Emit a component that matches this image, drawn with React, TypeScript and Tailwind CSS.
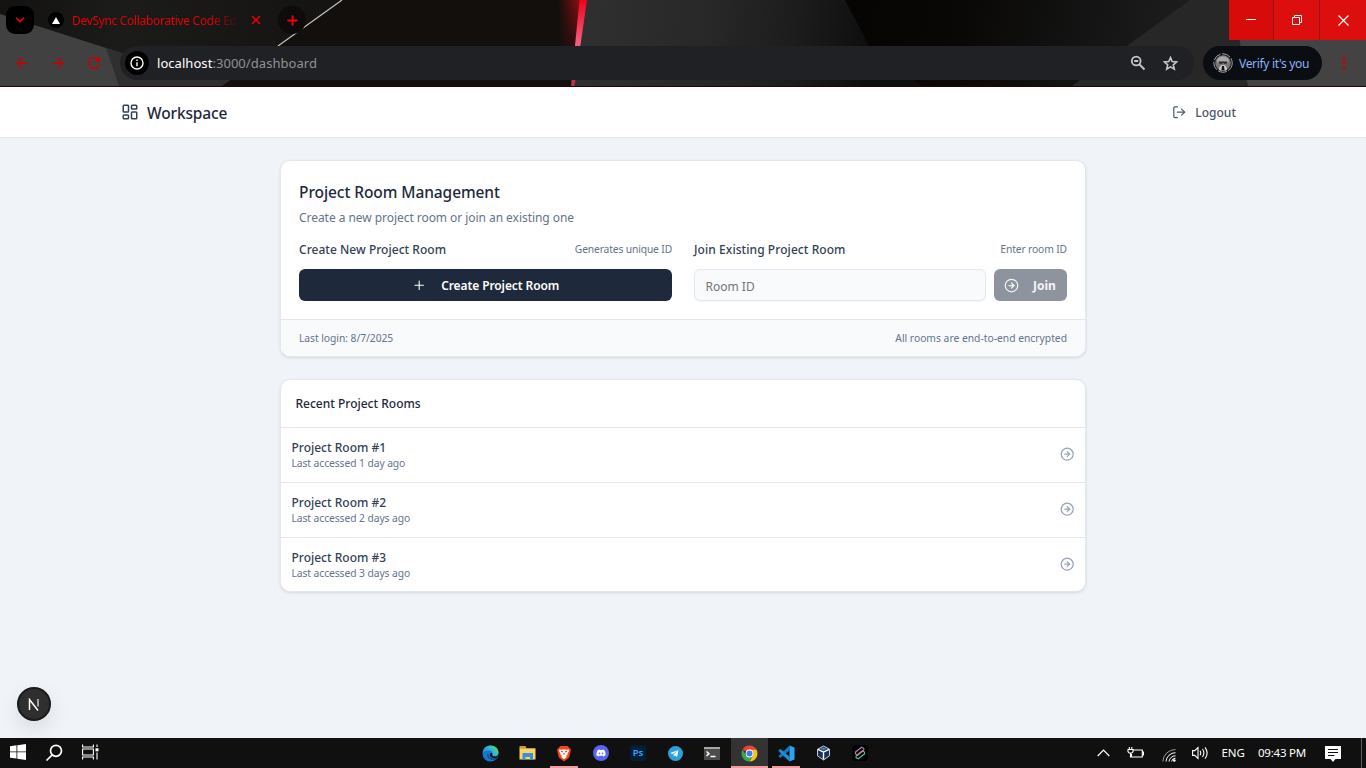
import type { ReactNode } from "react";
import { LayoutDashboard, LogOut, Plus, CircleArrowRight, X, ChevronDown, ArrowLeft, ArrowRight, Star } from "lucide-react";
import { FaDiscord, FaTelegramPlane } from "react-icons/fa";

const rooms = [
  { name: "Project Room #1", seen: "Last accessed 1 day ago" },
  { name: "Project Room #2", seen: "Last accessed 2 days ago" },
  { name: "Project Room #3", seen: "Last accessed 3 days ago" },
];

function Wallpaper() {
  return (
    <svg className="absolute inset-0 h-[86px] w-full" viewBox="0 0 1366 86" preserveAspectRatio="none" aria-hidden="true">
      <defs>
        <linearGradient id="left" x1="0" x2="1">
          <stop offset="0" stopColor="#131210" />
          <stop offset="0.3" stopColor="#1b1b1a" />
          <stop offset="1" stopColor="#13110f" />
        </linearGradient>
        <linearGradient id="mid" gradientUnits="userSpaceOnUse" x1="574" y1="0" x2="870" y2="40">
          <stop offset="0" stopColor="#303030" />
          <stop offset="0.45" stopColor="#282828" />
          <stop offset="0.75" stopColor="#1c1c1c" />
          <stop offset="1" stopColor="#0e0e0e" />
        </linearGradient>
        <linearGradient id="glow" x1="0" x2="1">
          <stop offset="0" stopColor="#8b0f12" stopOpacity="0" />
          <stop offset="1" stopColor="#8b0f12" />
        </linearGradient>
        <linearGradient id="fade" x1="0" y1="0" x2="0" y2="1">
          <stop offset="0" stopColor="#120f0c" stopOpacity="0" />
          <stop offset="0.75" stopColor="#120f0c" />
        </linearGradient>
        <linearGradient id="beam" x1="0" y1="0" x2="0" y2="1">
          <stop offset="0" stopColor="#f00020" />
          <stop offset="0.5" stopColor="#f4607c" />
          <stop offset="1" stopColor="#b8304a" />
        </linearGradient>
        <linearGradient id="right" gradientUnits="userSpaceOnUse" x1="845" y1="0" x2="1180" y2="60">
          <stop offset="0" stopColor="#060402" />
          <stop offset="0.35" stopColor="#090807" />
          <stop offset="1" stopColor="#1d1d1d" />
        </linearGradient>
      </defs>
      <rect width="400" height="86" fill="url(#left)" />
      <polygon points="0,14 125,54 120,86 0,86" fill="#414141" />
      <polygon points="106,48 125,54 240,80 225,86 119,86" fill="#2f2f2f" />
      <polygon points="342,0 580,0 572,86 222,86 278,46" fill="#120f0c" />
      <path d="M342 0L278 46" stroke="#c4c4c4" strokeWidth="1.200" />
      <rect x="558" y="0" width="22" height="86" fill="url(#glow)" />
      <rect x="558" y="0" width="22" height="86" fill="url(#fade)" />
      <polygon points="586,0 880,0 930,86 574,86" fill="url(#mid)" />
      <polygon points="845,0 1250,0 1250,86 922,86 870,48" fill="url(#right)" />
      <polygon points="1190,0 1232,0 1248,86 1072,86" fill="#272727" />
      <polygon points="1232,0 1366,0 1366,86 1248,86" fill="#434343" />
      <polygon points="579.5,0 587,0 574.5,86 571,86" fill="url(#beam)" />
    </svg>
  );
}

function BrowserBar() {
  return (
    <div className="relative h-[87px] shrink-0 overflow-hidden border-b border-[#2b0000] bg-[#141312]">
      <Wallpaper />
      <div className="relative flex h-[46px] items-start">
        <button className="mt-[6px] ml-[6px] flex h-7 w-7 items-center justify-center rounded-[9px] bg-black text-[#f00000]">
          <ChevronDown size={14} strokeWidth={3} />
        </button>
        <div className="mt-[6px] ml-[14px] flex h-7 w-[216px] items-center">
          <span className="flex h-4 w-4 items-center justify-center rounded-full bg-black">
            <svg width="8" height="7" viewBox="0 0 8 7"><path d="M4 0L8 7H0Z" fill="#fff" /></svg>
          </span>
          <span className="mt-[2px] ml-2 w-[170px] bg-gradient-to-r from-[#e80000] from-80% to-[#e8000010] to-98% bg-clip-text text-[12px] leading-5 tracking-[-0.320px] whitespace-nowrap text-transparent">
            DevSync Collaborative Code Ed
          </span>
          <X size={14} strokeWidth={2.600} className="ml-[7px] shrink-0 text-[#f00000]" />
        </div>
        <button className="mt-[6px] ml-[14px] flex h-7 w-7 items-center justify-center rounded-full bg-[#0d0c0b] text-[#f00000]">
          <Plus size={15} strokeWidth={3} />
        </button>
        <div className="ml-auto flex h-10 text-white">
          <span className="flex w-[45px] items-center justify-center border-r border-[#9c1313] bg-[#d80b0b]">
            <svg width="10" height="10" viewBox="0 0 10 10"><path d="M0 4.5h10" stroke="#fff" /></svg>
          </span>
          <span className="flex w-[46px] items-center justify-center border-r border-[#9c1313] bg-[#dc0e0e]">
            <svg width="10" height="10" viewBox="0 0 10 10" fill="none" stroke="#fff"><path d="M.5 2.5h7v7h-7zM2.5 2.5v-2h7v7h-2" /></svg>
          </span>
          <span className="flex w-[46px] items-center justify-center bg-[#dc0e0e]">
            <svg width="11" height="11" viewBox="0 0 11 11"><path d="M.5 .5l10 10M10.5 .5l-10 10" stroke="#fff" strokeWidth="1.2" /></svg>
          </span>
        </div>
      </div>
      <div className="relative flex h-[34px] items-center">
        <div className="ml-[14px] flex items-center gap-[20px] text-[#c80000]">
          <ArrowLeft size={16} strokeWidth={2.2} />
          <ArrowRight size={16} strokeWidth={2.2} />
          <svg width="16" height="16" viewBox="0 0 16 16" fill="none" stroke="currentColor" strokeWidth="1.5"><path d="M13.200 9.500A5.300 5.300 0 1 1 12.600 5.300M13.300 2.300v3.900H9.400" /></svg>
        </div>
        <div className="ml-[18px] flex h-[34px] w-[1074px] items-center rounded-full bg-[#202124] pl-[5px]">
          <span className="flex h-6 w-6 items-center justify-center rounded-full bg-black">
            <svg width="14" height="14" viewBox="0 0 14 14" fill="none" stroke="#fff" strokeWidth="1.4"><circle cx="7" cy="7" r="6" /><path d="M7 6.2v4M7 3.6v1.4" /></svg>
          </span>
          <span className="mt-px ml-2 text-[13px] tracking-[0.050px] whitespace-nowrap text-[#8f9296]"><span className="text-white">localhost</span>:3000/dashboard</span>
          <svg className="ml-auto" width="16" height="16" viewBox="0 0 16 16" fill="none" stroke="#c7c7c7" strokeWidth="1.8"><circle cx="6.2" cy="6" r="4.4" /><path d="M9.5 9.5l5 5M4.2 6h4" /></svg>
          <svg className="mr-[16px] ml-[17px]" width="15" height="15" viewBox="0 0 15 15" fill="none" stroke="#c7c7c7" strokeWidth="1.600"><path d="M7.500 1.600l1.700 4 4.400.4-3.300 2.900 1 4.300-3.800-2.300-3.800 2.300 1-4.300L1.400 6l4.400-.4z" /></svg>
        </div>
        <div className="ml-[9px] flex h-[34px] w-[119px] items-center rounded-full bg-[#0a0d12] pl-[10px]">
          <svg width="20" height="20" viewBox="0 0 20 20">
            <circle cx="10" cy="10" r="9.2" fill="none" stroke="#a5a5a5" strokeDasharray="9 1.5" />
            <circle cx="10" cy="10" r="7.8" fill="#777" />
            <path d="M4 9c-.5-7.500 12.500-7.500 12 0l-2 1.500H6z" fill="#a9a9a9" />
            <path d="M5.500 8.500h9l-.5 2-2.500.5-1.500-1-1.500 1-2.500-.5z" fill="#2a2a2a" />
            <path d="M6 17c0-3 1.500-5 4-5s4 2 4 5c-2.500 1.200-5.500 1.200-8 0z" fill="#d0d0d0" />
            <path d="M9 13h2l.7 4.500H8.300z" fill="#151515" />
          </svg>
          <span className="mt-px ml-[6px] text-[12px] tracking-[-0.320px] whitespace-nowrap text-[#8ab4f8]">Verify it's you</span>
        </div>
        <svg className="ml-[20px]" width="4" height="14" viewBox="0 0 4 14" fill="#c80000"><circle cx="2" cy="2" r="1.600" /><circle cx="2" cy="7" r="1.600" /><circle cx="2" cy="12" r="1.600" /></svg>
      </div>
    </div>
  );
}

function WorkspaceHeader() {
  return (
    <header className="flex h-[51px] shrink-0 items-center border-b border-[#e2e8f0] bg-white pr-[130px] pl-[121px]">
      <LayoutDashboard size={18} strokeWidth={2} className="text-[#334155]" />
      <h1 className="mt-[2px] ml-2 text-[15.500px] leading-6 font-medium tracking-[-0.130px] text-[#1e293b]">Workspace</h1>
      <button className="ml-auto flex items-center text-[#475569]">
        <LogOut size={14.4} />
        <span className="mt-px ml-[9px] text-[12px] leading-[18px] font-medium">Logout</span>
      </button>
    </header>
  );
}

function ManagementCard() {
  return (
    <section className="overflow-hidden rounded-[10px] border border-[#e2e8f0] bg-white shadow-[0_1px_3px_rgba(15,23,42,0.12)]">
      <div className="px-[18px] pt-[19px] pb-[18px]">
        <h2 className="text-[15.500px] leading-6 font-medium tracking-[-0.080px] text-[#1e293b]">Project Room Management</h2>
        <p className="mt-[5px] text-[12px] leading-[18px] tracking-[-0.050px] text-[#64748b]">Create a new project room or join an existing one</p>
        <div className="mt-[14px] grid grid-cols-2 gap-[22px]">
          <div>
            <div className="flex h-[18px] items-center justify-between">
              <h3 className="text-[12px] font-medium tracking-[0.030px] text-[#334155]">Create New Project Room</h3>
              <span className="text-[10.300px] tracking-[-0.150px] text-[#64748b]">Generates unique ID</span>
            </div>
            <button className="mt-[10px] flex h-8 w-full items-center justify-center rounded-[6px] bg-[#1e293b] text-[12px] font-semibold text-white">
              <Plus size={14.4} strokeWidth={1.800} className="mr-[15px]" />
              <span className="mt-px tracking-[-0.100px]">Create Project Room</span>
            </button>
          </div>
          <div>
            <div className="flex h-[18px] items-center justify-between">
              <h3 className="text-[12px] font-medium tracking-[0.070px] text-[#334155]">Join Existing Project Room</h3>
              <span className="text-[10.300px] tracking-[-0.130px] text-[#64748b]">Enter room ID</span>
            </div>
            <div className="mt-[10px] flex gap-2">
              <div className="flex h-8 flex-1 items-center rounded-[6px] border border-[#e2e8f0] bg-[#f8fafc] px-[10.500px] pt-[3px] text-[12px] text-[#757575] shadow-[0_1px_2px_rgba(0,0,0,0.04)]">
                Room ID
              </div>
              <button className="flex h-8 w-[73px] items-center rounded-[6px] bg-[#8e949d] pl-[10px] text-[12px] font-bold text-[#f3f4f5]">
                <CircleArrowRight size={15} className="mr-[14px]" />
                <span className="mt-px">Join</span>
              </button>
            </div>
          </div>
        </div>
      </div>
      <footer className="flex h-[37px] items-center justify-between border-t border-[#e2e8f0] bg-[#f8fafc] px-[18px] pt-[2px] text-[10.300px] text-[#64748b]">
        <span className="tracking-[-0.050px]">Last login: 8/7/2025</span>
        <span>All rooms are end-to-end encrypted</span>
      </footer>
    </section>
  );
}

function RecentRooms() {
  return (
    <section className="mt-[22px] h-[213px] overflow-hidden rounded-[10px] border border-[#e2e8f0] bg-white shadow-[0_1px_3px_rgba(15,23,42,0.12)]">
      <h2 className="flex h-[47px] items-center pl-[14.500px] text-[12px] font-medium text-[#1e293b]">Recent Project Rooms</h2>
      {rooms.map((room) => (
        <div key={room.name} className="flex h-[55px] items-center justify-between border-t border-[#e2e8f0] pr-[11px] pl-[10.500px]">
          <div>
            <p className="text-[12px] leading-[17px] font-medium text-[#334155]">{room.name}</p>
            <p className="text-[10.300px] leading-[15px] tracking-[-0.080px] text-[#64748b]">{room.seen}</p>
          </div>
          <CircleArrowRight size={14.4} className="mb-[2px] text-[#94a3b8]" />
        </div>
      ))}
    </section>
  );
}

function Cell({ children, active, running }: { children: ReactNode; active?: boolean; running?: boolean }) {
  return (
    <div className={active ? "flex h-[30px] w-[37px] flex-col items-center bg-[#333333]" : "flex h-[30px] w-[37px] flex-col items-center"}>
      <div className="flex h-7 items-center pt-[2px]">{children}</div>
      <div className={active ? "h-[2px] w-full bg-[#f59a9f]" : running ? "h-[2px] w-7 bg-[#f59a9f]" : "h-[2px]"} />
    </div>
  );
}

function Taskbar() {
  return (
    <footer className="flex h-[30px] shrink-0 items-center bg-[#101010] text-white">
      <div className="flex w-[471.500px]">
        <span className="flex w-9 justify-center"><svg width="16" height="16" viewBox="0 0 16 16" fill="#fff"><path d="M0 2.300L6.500 1.300V7.500H0zM7.300 1.200L16 0V7.500H7.300zM0 8.300H6.500V14.600L0 13.700zM7.300 8.300H16V16L7.300 14.700z" /></svg></span>
        <span className="flex w-9 justify-center"><svg width="18" height="18" viewBox="0 0 18 18" fill="none" stroke="#fff" strokeWidth="1.700"><circle cx="11" cy="6.800" r="5.500" /><path d="M7.200 10.800L1.500 16.500" /></svg></span>
        <span className="flex w-9 justify-center"><svg width="17" height="16" viewBox="0 0 17 16" fill="none" stroke="#fff" strokeWidth="1.100"><path d="M.6 .5v2.500h10.800V.5M.6 15.500V13h10.800v2.500M.6 5h10.800v6H.6zM15 .5v2.500M15 8.500v7" /><path d="M13.500 4.300h3v3h-3z" fill="#fff" stroke="none" /></svg></span>
      </div>
      <Cell>
        <svg width="17" height="17" viewBox="0 0 17 17">
          <defs><linearGradient id="edge" x1="0" x2="1" y1="0.600" y2="0.100"><stop offset="0" stopColor="#1c8fdc" /><stop offset="0.500" stopColor="#2fb8d8" /><stop offset="1" stopColor="#6bdc4b" /></linearGradient></defs>
          <circle cx="8.500" cy="8.500" r="8" fill="#1479cc" />
          <path d="M.6 8C1 3.500 4.500.5 8.500.5c4.600 0 8 3.200 8 6.700 0 2.300-1.700 3.800-4 3.800-2 0-2.800-.8-2.300-1.600.9-1.700-.6-3.900-3.200-3.900C3.800 5.500 1.200 6.600.6 8z" fill="url(#edge)" />
          <path d="M6 9c-.7 3.300 2.200 5.600 5.500 5.200 1.700-.2 2.800-.8 3.800-1.600" fill="none" stroke="#0f4f94" strokeWidth="1.700" />
          <path d="M10.300 9.300c-.7 1.200.6 2.300 2.700 2.200 1.300 0 2.500-.6 3.200-1.300-.5 1-1 1.900-1.700 2.700-3 .8-6.500-.5-6.600-2.800 0-1.100.5-1.900 1.400-2.400.9.300 1.300.9 1 1.600z" fill="#101010" />
        </svg>
      </Cell>
      <Cell>
        <svg width="17" height="15" viewBox="0 0 17 15"><path d="M.5 0h6l1 2.500H.5z" fill="#d99a1e" /><path d="M.5 2.300h16V13.500H.5z" fill="#fbd667" /><path d="M3.500 7h10.500v7h-3v-3H6.500v3h-3z" fill="#3b8fd6" /></svg>
      </Cell>
      <Cell running>
        <svg width="14" height="17" viewBox="0 0 14 17"><path d="M3.500 1h7l1.500 1.500L14 4.500 12.200 12.500 7 16.500 1.800 12.500 0 4.500 2 2.500z" fill="#f4431e" /><path d="M2.300 4.500l2 .3L7 4.300l2.700.5 2-.3.400 1.500-1.800 3 .4 1L8.500 11l1.500.8L7 14.300 4 11.800l1.500-.8-2.200-1 .4-1L1.900 6z" fill="#fff" /><path d="M4 6.300l2 .8M10 6.300l-2 .8M7 8v2" stroke="#f4431e" strokeWidth="1.100" /></svg>
      </Cell>
      <Cell><span className="flex h-4 w-4 items-center justify-center rounded-full bg-[#5865f2]"><FaDiscord size={10} /></span></Cell>
      <Cell><span className="flex h-4 w-4 items-center justify-center rounded-[3px] bg-[#001e36] text-[9.500px] leading-none font-semibold text-[#31a8ff]">Ps</span></Cell>
      <Cell><span className="flex h-[15px] w-[15px] items-center justify-center rounded-full bg-[#2aa1da]"><FaTelegramPlane size={9} className="mr-px" /></span></Cell>
      <Cell>
        <svg width="16" height="13" viewBox="0 0 16 13"><rect width="16" height="13" fill="#4c4c4c" /><rect width="16" height="2" fill="#a6a6a6" /><path d="M2.500 4.500l2.500 2.200-2.500 2.200M6.500 9.500h5" fill="none" stroke="#fff" strokeWidth="1.400" /></svg>
      </Cell>
      <Cell active>
        <svg width="17" height="17" viewBox="0 0 48 48">
          <path d="M24 24L4.500 12.800A22.500 22.500 0 0 1 43.500 12.800z" fill="#ea4335" />
          <path d="M24 24V12.800h19.500A22.500 22.500 0 0 1 24 46.500L33.700 29.600z" fill="#fbc116" />
          <path d="M24 24L33.700 29.600 24 46.500A22.500 22.500 0 0 1 4.500 12.800L14.300 29.600z" fill="#34a853" />
          <path d="M24 12.800h19.500l-2-3L24 8z" fill="#ea4335" />
          <circle cx="24" cy="24" r="11" fill="#fff" /><circle cx="24" cy="24" r="8.500" fill="#3b7ded" />
        </svg>
      </Cell>
      <Cell running>
        <svg width="17" height="17" viewBox="0 0 17 17"><path d="M11.500.5v5L2.300 13 .3 11.300z" fill="#1277bd" /><path d="M11.500 16.500v-5L2.300 4 .3 5.700z" fill="#1a8fdb" /><path d="M11.500.5l5 2v12l-5 2z" fill="#2ea4f0" /></svg>
      </Cell>
      <Cell>
        <svg width="13" height="16" viewBox="0 0 14 16"><path d="M7 .5L13.500 4v7L7 15.500.5 11V4z" fill="#16325c" stroke="#d8e2f0" strokeWidth="1" /><path d="M1 4l6 3 6-3M7 7v8" stroke="#fff" strokeWidth="1.500" fill="none" /><path d="M3.500 3.500L7 5l3.500-1.500L7 2z" fill="#4d7fc4" /></svg>
      </Cell>
      <Cell>
        <span className="flex h-4 w-4 items-center justify-center rounded-[4px] bg-black">
          <svg width="12" height="14" viewBox="0 0 12 14" fill="none" strokeWidth="1.200" strokeLinejoin="round">
            <path d="M1.500 8V6L7.500 1.200 9.800 2.600V4" stroke="#b07ad0" />
            <path d="M1.500 8L3.500 9.300 9.800 4" stroke="#38b0c8" />
            <path d="M2 10.200L8.500 4.800 10.500 6" stroke="#e08a55" />
            <path d="M2 10.200V11.600L4.300 12.800 10.500 8V6" stroke="#3fc0a8" />
          </svg>
        </span>
      </Cell>
      <div className="ml-auto flex h-full items-center">
        <svg width="13" height="8" viewBox="0 0 13 8" fill="none" stroke="#fff" strokeWidth="1.200"><path d="M.7 7L6.500 1.200 12.300 7" /></svg>
        <svg className="ml-[17px]" width="17" height="12" viewBox="0 0 17 12" fill="none" stroke="#fff" strokeWidth="1.100"><path d="M6.500 3h8.800v7H4.500V7M15.500 5h1v3h-1M2.300 0v2M4.800 0v2M1 2.500h5v2.200L4.800 6H2.200L1 4.700zM3.500 6v4.500" /></svg>
        <svg className="mt-[3px] ml-[18px]" width="14" height="14" viewBox="0 0 14 14" fill="none" stroke="#fff" strokeWidth="1"><path d="M.8 13.500A12.700 12.700 0 0 1 13.500 1.500" stroke="#9a9a9a" /><path d="M4 13.500A9.500 9.500 0 0 1 13.500 4.700M7 13.500a6.500 6.500 0 0 1 6.500-5.700" /><path d="M9.600 13.500a4 4 0 0 1 3.900-3.300" /><circle cx="12.300" cy="12.500" r="1.300" fill="#fff" stroke="none" /></svg>
        <svg className="ml-[16px]" width="17" height="14" viewBox="0 0 17 14" fill="none" stroke="#fff" strokeWidth="1.100"><path d="M.6 4.600h2.200L6 1.500v11L2.800 9.400H.6zM8 4.800q1.500 2.200 0 4.400M10.500 3q2.800 4 0 8M13 1.300q4.300 5.700 0 11.400" /></svg>
        <span className="ml-[12px] text-[11.500px] whitespace-nowrap">ENG</span>
        <span className="ml-[13px] text-[11.500px] tracking-[-0.220px] whitespace-nowrap">09:43 PM</span>
        <svg className="mt-px ml-[19px]" width="16" height="16" viewBox="0 0 16 16"><path d="M0 0h16v13h-5.500L8 16l-2.500-3H0z" fill="#fff" /><path d="M3 3.500h10M3 6.500h10M3 9.500h6.500" stroke="#101010" /></svg>
        <span className="ml-[20px] h-full w-[5px] border-l border-[#606060]" />
      </div>
    </footer>
  );
}

export default function App() {
  return (
    <div className="flex h-[768px] w-[1366px] flex-col overflow-hidden bg-[#f0f4f9] font-['Noto_Sans','Open_Sans',sans-serif]">
      <BrowserBar />
      <WorkspaceHeader />
      <main className="relative flex-1 pt-[22px]">
        <div className="mx-auto w-[806px]">
          <ManagementCard />
          <RecentRooms />
        </div>
        <div className="absolute top-[549px] left-[17px] flex h-[34px] w-[34px] items-center justify-center rounded-full border-2 border-[#1a1a1a] bg-[#2f2f2f] shadow-[0_8px_20px_rgba(0,0,0,0.100)]">
          <svg width="12" height="13" viewBox="0 0 12 13" fill="none" stroke="#fff" strokeWidth="1.500"><path d="M1.500 12V1.500L10 12.500" /><path d="M10 1v7.500" stroke="#c9c9c9" /></svg>
        </div>
      </main>
      <Taskbar />
    </div>
  );
}
